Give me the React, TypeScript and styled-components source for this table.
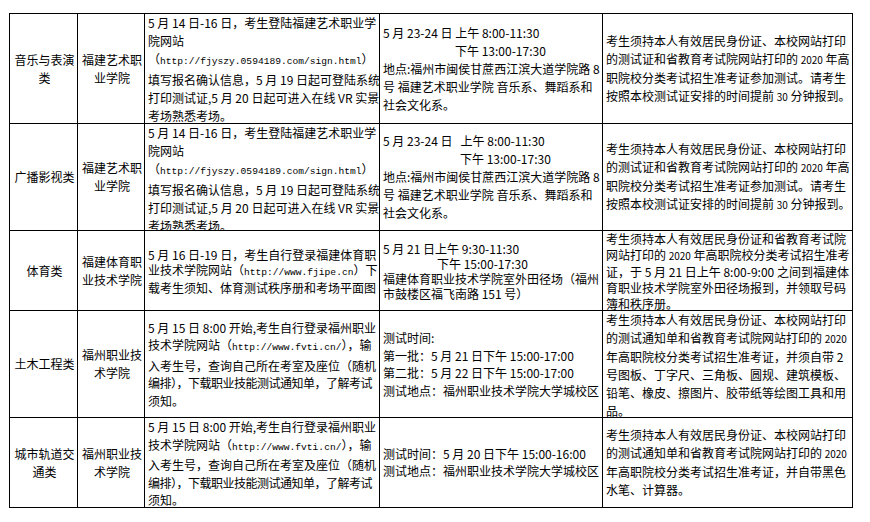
import React from "react";
import styled, { createGlobalStyle } from "styled-components";

const Global = createGlobalStyle`
  html, body { margin: 0; padding: 0; background: #fff; }
  body {
    font-family: "Noto Sans CJK SC", "Noto Sans", sans-serif;
    font-size: 12px;
    color: #000;
  }
`;

const Page = styled.div`
  padding: 13px 0 0 9px;
`;

const Table = styled.div`
  display: grid;
  grid-template-columns: 68px 67px 235px 223px 250px;
  grid-template-rows: 110px 107px 80px 107px 90px;
  width: max-content;
  border-top: 1px solid #000;
  border-left: 1px solid #000;
`;

const Cell = styled.div<{ $center?: boolean; $lh: number }>`
  box-sizing: border-box;
  display: flex;
  flex-direction: column;
  overflow: hidden;
  border-right: 1px solid #000;
  border-bottom: 1px solid #000;
  padding: 0 1px 0 3px;
  line-height: ${(p) => p.$lh}px;
  text-align: ${(p) => (p.$center ? "center" : "left")};
`;

const Content = styled.div`
  margin: auto 0;
`;

const Line = styled.div<{ $indent?: number; $ls?: number }>`
  white-space: nowrap;
  padding-left: ${(p) => p.$indent ?? 0}px;
  letter-spacing: ${(p) => p.$ls ?? 0}px;
`;

const Url = styled.span`
  font-family: "Liberation Mono", "DejaVu Sans Mono", monospace;
  font-size: 9.6px;
  letter-spacing: 0;
`;

const Small = styled.span`
  font-size: 10px;
`;

type LineDef = string | { t: string; indent?: number; ls?: number };
type CellDef = { lines: LineDef[]; lh?: number };
type RowDef = { c1: string[]; c2: string[]; c3: CellDef; c4: CellDef; c5: CellDef };

function renderText(t: string) {
  const parts = t.split(/(`[^`]+`|\^[^^]+\^)/);
  return parts.map((p, i) => {
    if (p.startsWith("`")) return <Url key={i}>{p.slice(1, -1)}</Url>;
    if (p.startsWith("^")) return <Small key={i}>{p.slice(1, -1)}</Small>;
    return <React.Fragment key={i}>{p}</React.Fragment>;
  });
}

const artSite: LineDef[] = [
  "5 月 14 日-16 日，考生登陆福建艺术职业学",
  "院网站",
  "（`http://fjyszy.0594189.com/sign.html`）",
  "填写报名确认信息，5 月 19 日起可登陆系统",
  "打印测试证,5 月 20 日起可进入在线 VR 实景",
  "考场熟悉考场。",
];

const artNote: LineDef[] = [
  "考生须持本人有效居民身份证、本校网站打印",
  "的测试证和省教育考试院网站打印的 ^2020^ 年高",
  "职院校分类考试招生准考证参加测试。请考生",
  "按照本校测试证安排的时间提前 ^30^ 分钟报到。",
];

const fvtiSite: LineDef[] = [
  "5 月 15 日 8:00 开始,考生自行登录福州职业",
  "技术学院网站（`http://www.fvti.cn/`），输",
  "入考生号，查询自己所在考室及座位（随机",
  { t: "编排），下载职业技能测试通知单，了解考试", ls: -0.5 },
  "须知。",
];

const rows: RowDef[] = [
  {
    c1: ["音乐与表演", "类"],
    c2: ["福建艺术职", "业学院"],
    c3: { lines: artSite },
    c4: {
      lines: [
        "5 月 23-24 日 上午 8:00-11:30",
        { t: "下午 13:00-17:30", indent: 72 },
        "地点:福州市闽侯甘蔗西江滨大道学院路 8",
        "号 福建艺术职业学院 音乐系、舞蹈系和",
        "社会文化系。",
      ],
    },
    c5: { lines: artNote },
  },
  {
    c1: ["广播影视类"],
    c2: ["福建艺术职", "业学院"],
    c3: { lines: artSite },
    c4: {
      lines: [
        "5 月 23-24 日\u00a0\u00a0 上午 8:00-11:30",
        { t: "下午 13:00-17:30", indent: 77 },
        "地点:福州市闽侯甘蔗西江滨大道学院路 8",
        "号 福建艺术职业学院 音乐系、舞蹈系和",
        "社会文化系。",
      ],
    },
    c5: { lines: artNote },
  },
  {
    c1: ["体育类"],
    c2: ["福建体育职", "业技术学院"],
    c3: {
      lh: 15,
      lines: [
        "5 月 16 日-19 日，考生自行登录福建体育职",
        "业技术学院网站（`http://www.fjipe.cn`）下",
        "载考生须知、体育测试秩序册和考场平面图",
      ],
    },
    c4: {
      lh: 15,
      lines: [
        "5 月 21 日上午 9:30-11:30",
        { t: "下午 15:00-17:30", indent: 54 },
        "福建体育职业技术学院室外田径场（福州",
        "市鼓楼区福飞南路 151 号）",
      ],
    },
    c5: {
      lh: 16,
      lines: [
        "考生须持本人有效居民身份证和省教育考试院",
        "网站打印的 ^2020^ 年高职院校分类考试招生准考",
        "证，于 5 月 21 日上午 8:00-9:00 之间到福建体",
        "育职业技术学院室外田径场报到，并领取号码",
        "簿和秩序册。",
      ],
    },
  },
  {
    c1: ["土木工程类"],
    c2: ["福州职业技", "术学院"],
    c3: { lh: 17.5, lines: fvtiSite },
    c4: {
      lh: 17.5,
      lines: [
        "测试时间:",
        "第一批：5 月 21 日下午 15:00-17:00",
        "第二批：5 月 22 日下午 15:00-17:00",
        "测试地点：福州职业技术学院大学城校区",
      ],
    },
    c5: {
      lines: [
        "考生须持本人有效居民身份证、本校网站打印",
        "的测试通知单和省教育考试院网站打印的 ^2020^",
        "年高职院校分类考试招生准考证，并须自带 2",
        "号图板、丁字尺、三角板、圆规、建筑模板、",
        "铅笔、橡皮、擦图片、胶带纸等绘图工具和用",
        "品。",
      ],
    },
  },
  {
    c1: ["城市轨道交", "通类"],
    c2: ["福州职业技", "术学院"],
    c3: { lh: 17.6, lines: fvtiSite },
    c4: {
      lh: 16.7,
      lines: [
        "测试时间：5 月 20 日下午 15:00-16:00",
        "测试地点：福州职业技术学院大学城校区",
      ],
    },
    c5: {
      lines: [
        "考生须持本人有效居民身份证、本校网站打印",
        "的测试通知单和省教育考试院网站打印的 ^2020^",
        "年高职院校分类考试招生准考证，并自带黑色",
        "水笔、计算器。",
      ],
    },
  },
];

function TextCell({ def }: { def: CellDef }) {
  return (
    <Cell $lh={def.lh ?? 18}>
      <Content>
        {def.lines.map((l, i) => {
          const o = typeof l === "string" ? { t: l } : l;
          return (
            <Line key={i} $indent={o.indent} $ls={o.ls}>
              {renderText(o.t)}
            </Line>
          );
        })}
      </Content>
    </Cell>
  );
}

function NameCell({ lines }: { lines: string[] }) {
  return (
    <Cell $center $lh={18}>
      <Content>
        {lines.map((l, i) => (
          <Line key={i}>{l}</Line>
        ))}
      </Content>
    </Cell>
  );
}

export default function App() {
  return (
    <>
      <Global />
      <Page>
        <Table>
          {rows.map((r, i) => (
            <React.Fragment key={i}>
              <NameCell lines={r.c1} />
              <NameCell lines={r.c2} />
              <TextCell def={r.c3} />
              <TextCell def={r.c4} />
              <TextCell def={r.c5} />
            </React.Fragment>
          ))}
        </Table>
      </Page>
    </>
  );
}
